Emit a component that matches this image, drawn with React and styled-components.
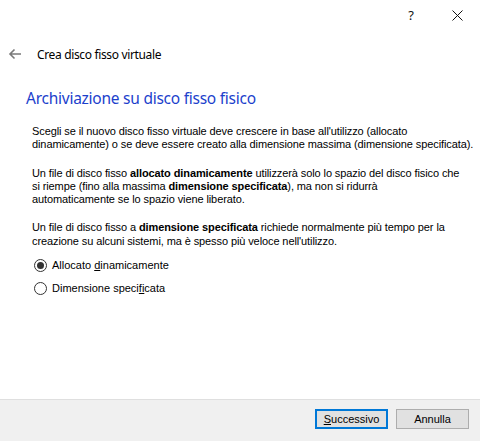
import React, { useState } from 'react';
import styled, { createGlobalStyle } from 'styled-components';

const GlobalStyle = createGlobalStyle`
  html, body {
    margin: 0;
    padding: 0;
    background: #ffffff;
  }
`;

const Window = styled.div`
  width: 480px;
  height: 441px;
  background: #ffffff;
  display: flex;
  flex-direction: column;
  overflow: hidden;
  font-family: "Liberation Sans", Arial, sans-serif;
  color: #000;
`;

const TitleBar = styled.div`
  height: 30px;
  display: flex;
  justify-content: flex-end;
  align-items: center;
`;

const CaptionButton = styled.button`
  width: 46px;
  height: 30px;
  border: none;
  background: transparent;
  display: flex;
  align-items: center;
  justify-content: center;
  padding: 0;
  color: #111;
  font-family: "Noto Sans", sans-serif;
  font-size: 13px;
`;

const Header = styled.div`
  display: flex;
  align-items: center;
  height: 20px;
  margin-top: 14px;
  padding-left: 8px;
`;

const BackButton = styled.span`
  width: 14px;
  height: 14px;
  display: flex;
  align-items: center;
  margin-right: 15px;
`;

const HeaderText = styled.span`
  font-family: "Noto Sans", "Open Sans", sans-serif;
  font-size: 12px;
  color: #000;
  letter-spacing: -0.35px;
`;

const Content = styled.div`
  flex: 1;
  padding-left: 26px;
`;

const MainTitle = styled.h1`
  margin: 23px 0 16px 0;
  font-family: "Noto Sans", "Open Sans", sans-serif;
  font-weight: 400;
  font-size: 15.5px;
  line-height: 22px;
  color: #1c3fcc;
  letter-spacing: -0.25px;
`;

const Body = styled.div`
  padding-left: 6px;
`;

const Paragraphs = styled.div`
  display: flex;
  flex-direction: column;
  gap: 15px;
`;

const Para = styled.p`
  margin: 0;
  font-size: 11px;
  line-height: 13.3px;
  white-space: nowrap;
  letter-spacing: -0.1px;
`;

const Options = styled.div`
  display: flex;
  flex-direction: column;
  gap: 3px;
  margin-top: 7px;
  padding-left: 2px;
`;

const OptionRow = styled.label`
  display: flex;
  align-items: center;
  height: 20px;
  font-size: 11px;
  cursor: default;
`;

const RadioCircle = styled.span`
  width: 11px;
  height: 11px;
  border: 1px solid #333;
  border-radius: 50%;
  display: flex;
  align-items: center;
  justify-content: center;
  margin-right: 5px;
  background: #fff;
  &::after {
    content: '';
    width: 7px;
    height: 7px;
    border-radius: 50%;
    background: ${p => (p.$checked ? '#333' : 'transparent')};
  }
`;

const Footer = styled.div`
  height: 42px;
  background: #f0f0f0;
  border-top: 1px solid #dfdfdf;
  display: flex;
  justify-content: flex-end;
  align-items: flex-start;
  padding: 9px 11px 0 0;
  gap: 8px;
  box-sizing: border-box;
`;

const DialogButton = styled.button`
  width: 73px;
  height: 20px;
  box-sizing: border-box;
  background: #e1e1e1;
  border: ${p => (p.$primary ? '2px solid #0078d7' : '1px solid #adadad')};
  font-family: "Liberation Sans", Arial, sans-serif;
  font-size: 11px;
  color: #000;
  padding: 0;
  display: flex;
  align-items: center;
  justify-content: center;
`;

const Key = styled.u`
  text-decoration-thickness: 1px;
  text-underline-offset: 1px;
`;

export default function App() {
  const [choice, setChoice] = useState('dyn');

  return (
    <Window>
      <GlobalStyle />
      <TitleBar>
        <CaptionButton>?</CaptionButton>
        <CaptionButton>
          <svg width="11" height="11" viewBox="0 0 11 11">
            <path d="M0.5 0.5 L10.5 10.5 M10.5 0.5 L0.5 10.5" stroke="#111" strokeWidth="1" />
          </svg>
        </CaptionButton>
      </TitleBar>

      <Header>
        <BackButton>
          <svg width="14" height="12" viewBox="0 0 14 12">
            <path d="M13 6 H2 M6.5 1.5 L2 6 L6.5 10.5" stroke="#7a7a7a" strokeWidth="1.6" fill="none" />
          </svg>
        </BackButton>
        <HeaderText>Crea disco fisso virtuale</HeaderText>
      </Header>

      <Content>
        <MainTitle>Archiviazione su disco fisso fisico</MainTitle>
        <Body>
          <Paragraphs>
            <Para>
              Scegli se il nuovo disco fisso virtuale deve crescere in base all'utilizzo (allocato
              <br />
              dinamicamente) o se deve essere creato alla dimensione massima (dimensione specificata).
            </Para>
            <Para>
              Un file di disco fisso <b>allocato dinamicamente</b> utilizzerà solo lo spazio del disco fisico che
              <br />
              si riempe (fino alla massima <b>dimensione specificata</b>), ma non si ridurrà
              <br />
              automaticamente se lo spazio viene liberato.
            </Para>
            <Para>
              Un file di disco fisso a <b>dimensione specificata</b> richiede normalmente più tempo per la
              <br />
              creazione su alcuni sistemi, ma è spesso più veloce nell'utilizzo.
            </Para>
          </Paragraphs>
          <Options>
            <OptionRow onClick={() => setChoice('dyn')}>
              <RadioCircle $checked={choice === 'dyn'} />
              <span>
                Allocato <Key>d</Key>inamicamente
              </span>
            </OptionRow>
            <OptionRow onClick={() => setChoice('fix')}>
              <RadioCircle $checked={choice === 'fix'} />
              <span>
                Dimensione speci<Key>fi</Key>cata
              </span>
            </OptionRow>
          </Options>
        </Body>
      </Content>

      <Footer>
        <DialogButton $primary>
          <span>
            <Key>S</Key>uccessivo
          </span>
        </DialogButton>
        <DialogButton>Annulla</DialogButton>
      </Footer>
    </Window>
  );
}
